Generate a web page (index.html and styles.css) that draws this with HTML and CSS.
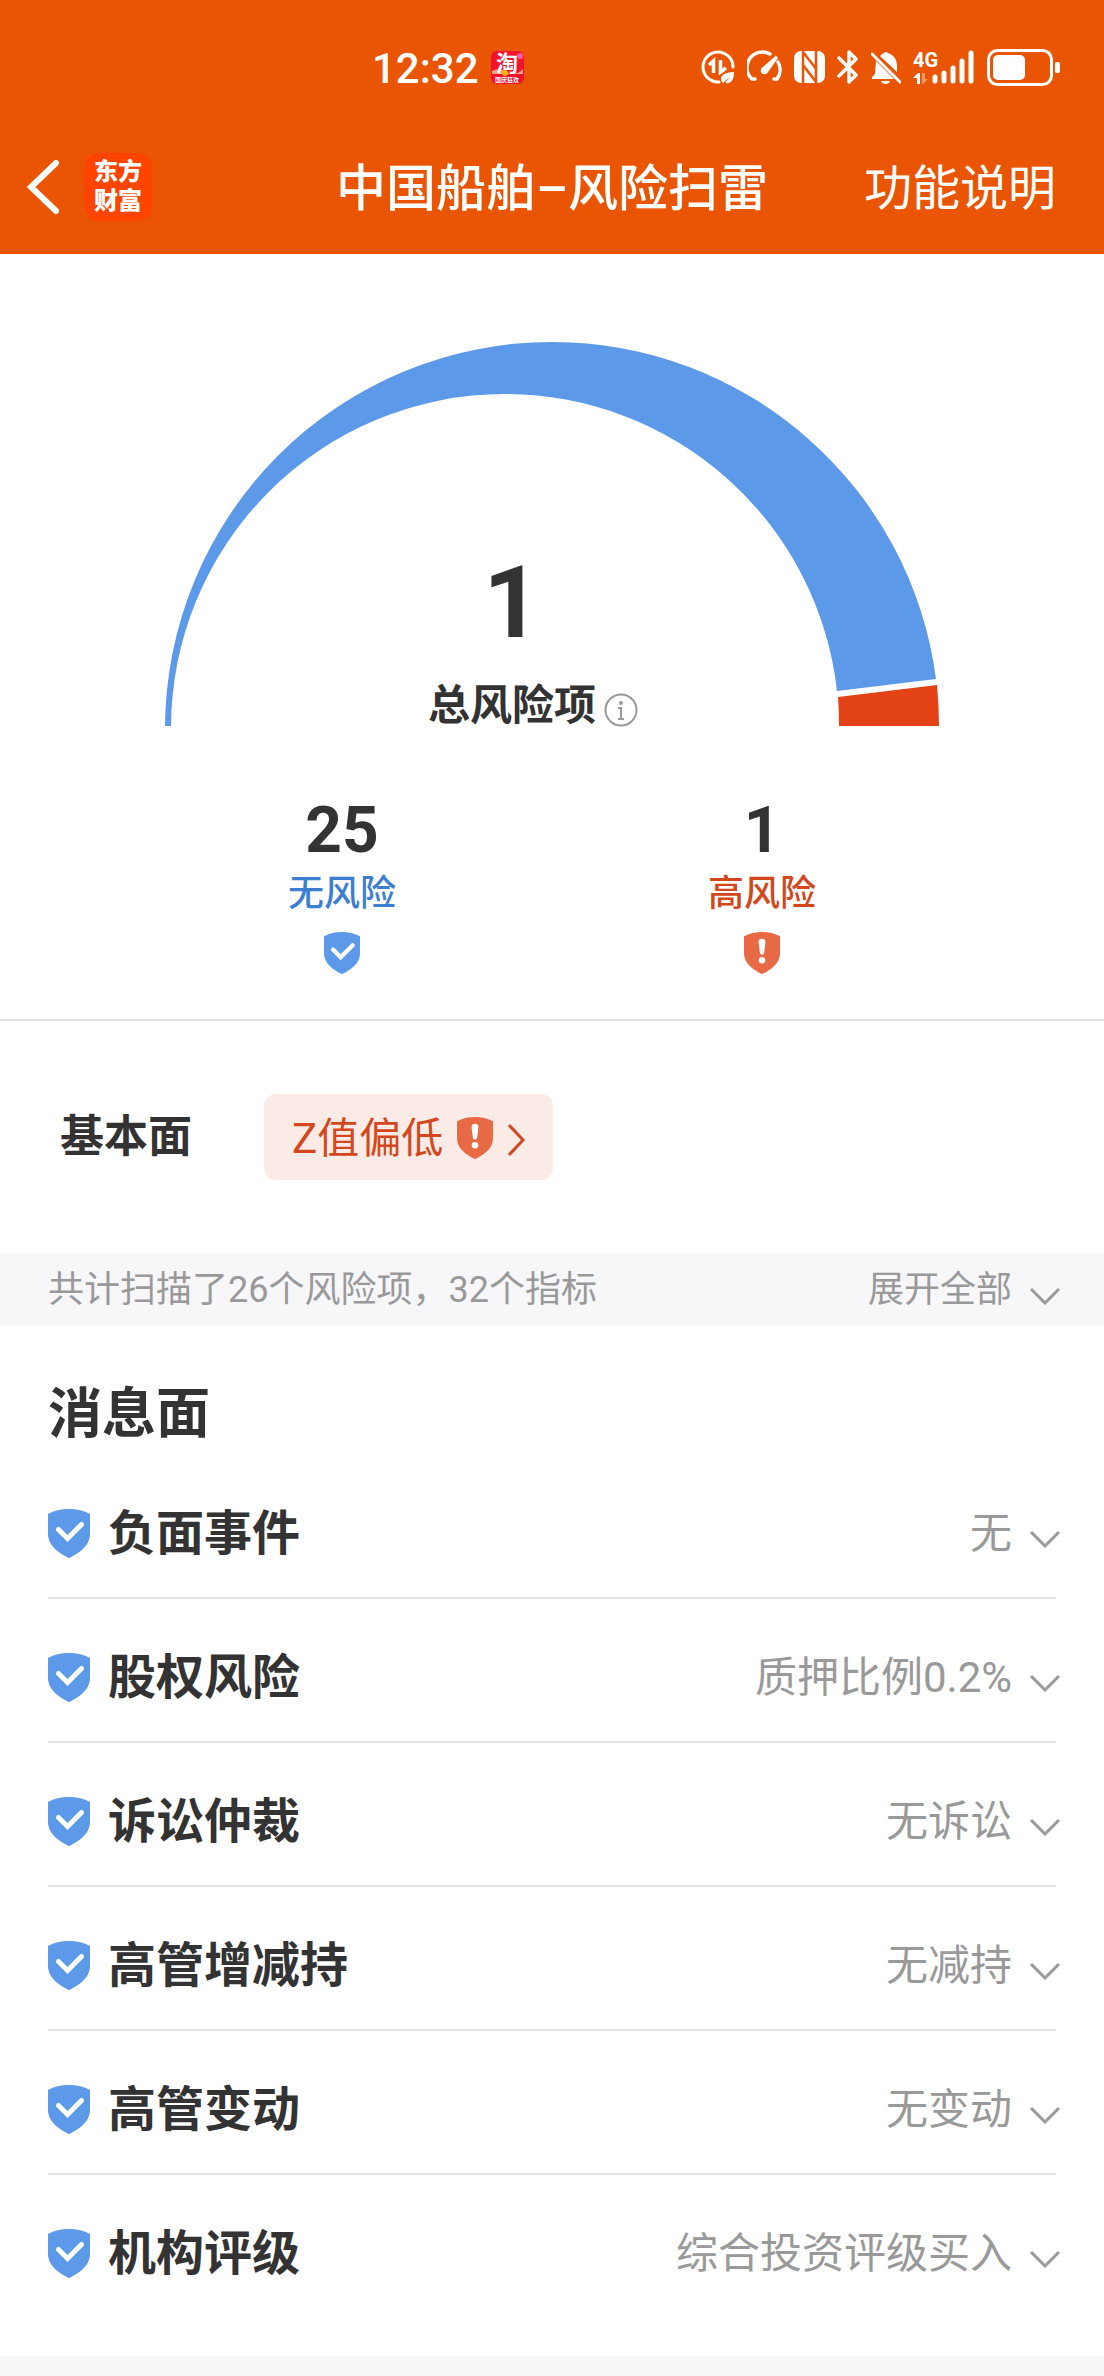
FILE: index.html
```html
<!DOCTYPE html>
<html lang="zh-CN">
<head>
<meta charset="utf-8">
<meta name="viewport" content="width=device-width, initial-scale=1">
<title>中国船舶–风险扫雷</title>
<link rel="stylesheet" href="styles.css">
</head>
<body>
<svg class="symbols" width="0" height="0" aria-hidden="true">
  <symbol id="shield-ok" viewBox="0 0 42 49">
    <path fill="#5c99e8" d="M0 5Q9 0 21 0T42 5V25C42 37 30 45 21 49C12 45 0 37 0 25Z"/>
    <path fill="none" stroke="#fff" stroke-width="5" stroke-linecap="round" d="M10.500 20.500L19.500 29.500L33.500 15.500"/>
  </symbol>
  <symbol id="shield-alert" viewBox="0 0 42 49">
    <path fill="#e86a45" d="M0 5Q9 0 21 0T42 5V25C42 37 30 45 21 49C12 45 0 37 0 25Z"/>
    <path fill="#fff" d="M17 12a4 4 0 0 1 8 0L23.500 24a2.500 2.500 0 0 1-5 0Z"/>
    <circle cx="21" cy="33" r="3.800" fill="#fff"/>
  </symbol>
  <symbol id="chevron-down" viewBox="0 0 30 30">
    <path fill="none" stroke="#999" stroke-width="3" d="M1 14L15 28L29 14"/>
  </symbol>
</svg>

<header class="top">
  <div class="status">
    <div class="status-left">
      <span class="clock">12:32</span>
      <svg width="33" height="33" viewBox="0 0 33 33" role="img" aria-label="淘宝">
        <rect width="33" height="33" rx="6" fill="#f0142f"/>
        <circle cx="29" cy="5" r="3" fill="#ff5f9e"/>
        <path fill="#f9a08a" d="M1 20Q8 16 16 21T32 18V23H1Z"/>
        <circle cx="14" cy="22" r="3" fill="#ffb400"/>
        <text class="tao" x="5" y="20">淘</text>
        <text class="tao-sub" x="4" y="31">国庆狂欢</text>
      </svg>
    </div>
    <div class="status-icons" aria-hidden="true">
      <svg width="34" height="34" viewBox="0 0 34 34" fill="none" stroke="#fff" stroke-width="3">
        <path d="M32 17A15 15 0 1 0 18 32" stroke-linecap="round"/>
        <path d="M8 15L12.500 11V23M19.500 10V22L25 18" stroke-width="3.500"/>
        <path fill="#fff" stroke="none" d="M33 22C25 22 20 25 20 29Q20 31 22 33L29 27L24 33C31 34 33 29 33 22Z"/>
      </svg>
      <svg width="35" height="34" viewBox="0 0 35 34" fill="none" stroke="#fff" stroke-width="3.500" stroke-linecap="round">
        <path d="M8 29H5A15.500 15.500 0 0 1 23 4M31 12A15.500 15.500 0 0 1 30 29H27"/>
        <path fill="#fff" stroke="none" d="M29 5.500L31 8L21 22A3.800 3.800 0 1 1 16 17Z"/>
      </svg>
      <svg width="31" height="34" viewBox="0 0 31 34">
        <rect y="1" width="31" height="32" rx="7" fill="#fff"/>
        <path fill="none" stroke="#ea5504" stroke-width="2.500" d="M9 33V2L23 20M22 1V32L9 15"/>
      </svg>
      <svg width="22" height="34" viewBox="0 0 22 34" fill="none" stroke="#fff" stroke-width="3.500" stroke-linecap="round" stroke-linejoin="round">
        <path d="M2 8L19 25L12 32V2L19 9L2 26"/>
      </svg>
      <svg width="30" height="34" viewBox="0 0 30 34" fill="#fff">
        <path d="M5 11L23 29H1V27L4 24ZM9 6Q11 4 13 3A2.500 2.500 0 0 1 17 3C23 5 26 10 26 16V22Z"/>
        <path d="M10 31H19Q18 34 14.500 34T10 31Z"/>
        <path d="M1 4L29 32" stroke="#fff" stroke-width="3" stroke-linecap="round"/>
      </svg>
      <svg width="62" height="50" viewBox="0 -8 62 50" fill="#fff">
        <text class="net" x="0" y="17">4G</text>
        <path d="M0 28L5 23H7V34H4V28Z"/>
        <path opacity=".4" d="M9 23H12V29H15L10 34H9Z"/>
        <path fill="none" stroke="#fff" stroke-width="5" stroke-linecap="round" d="M22 27V31M31 23V31M40 18V31M49 11V31M58 3V31"/>
      </svg>
      <svg width="73" height="37" viewBox="0 0 73 37">
        <rect x="1.500" y="1.500" width="63" height="34" rx="9" fill="none" stroke="#fff" stroke-width="3"/>
        <rect x="6" y="6" width="32" height="25" rx="5" fill="#fff"/>
        <rect x="68" y="13" width="5" height="11" rx="2" fill="#fff"/>
      </svg>
    </div>
  </div>
  <nav class="nav">
    <div class="nav-left">
      <button class="back" type="button" aria-label="返回">
        <svg width="33" height="56" viewBox="0 0 33 56"><path fill="none" stroke="#fff" stroke-width="6" stroke-linecap="round" d="M29 4L4 28L29 52"/></svg>
      </button>
      <a class="brand" href="#home"><span>东方</span><span>财富</span></a>
    </div>
    <h1 class="title">中国船舶–风险扫雷</h1>
    <a class="help" href="#help">功能说明</a>
  </nav>
</header>

<main>
  <section class="summary">
    <div class="gauge">
      <svg class="gauge-arc" viewBox="0 0 776 385" aria-hidden="true">
        <path fill="#5c99e8" d="M1 388A387 387 0 0 1 388 1A387 387 0 0 1 772 338L673 350A334 334 0 0 0 341 53A334 334 0 0 0 7 388Z"/>
        <path fill="#e24216" d="M773 344L674 356Q675 370 675 385H775Q775 365 773 344Z"/>
      </svg>
      <div class="total">
        <div class="total-text">
          <strong class="total-num">1</strong>
          <span class="total-label">总风险项</span>
        </div>
        <button class="info" type="button" aria-label="说明">
          <svg width="34" height="34" viewBox="0 0 34 34" fill="none" stroke="#999" stroke-width="2">
            <circle cx="17" cy="17" r="15.500"/>
            <circle cx="17" cy="10" r="2" fill="#999" stroke="none"/>
            <path d="M14 15H17V26M14 26H20"/>
          </svg>
        </button>
      </div>
    </div>
    <div class="stats">
      <div class="stat">
        <strong class="stat-num">25</strong>
        <span class="stat-label safe">无风险</span>
        <svg class="shield-sm"><use href="#shield-ok"/></svg>
      </div>
      <div class="stat">
        <strong class="stat-num">1</strong>
        <span class="stat-label danger">高风险</span>
        <svg class="shield-sm"><use href="#shield-alert"/></svg>
      </div>
    </div>
  </section>

  <section class="basic">
    <h2 class="basic-title">基本面</h2>
    <a class="tag" href="#z">
      <span class="tag-text">Z值偏低</span>
      <svg class="shield-sm"><use href="#shield-alert"/></svg>
      <svg width="18" height="36" viewBox="0 0 18 36"><path fill="none" stroke="#d2481c" stroke-width="3" d="M2 5L16 20L2 35"/></svg>
    </a>
  </section>

  <div class="scan">
    <span class="scan-text">共计扫描了26个风险项，32个指标</span>
    <button class="expand" type="button" aria-expanded="false"><span class="scan-text">展开全部</span><svg class="chevron"><use href="#chevron-down"/></svg></button>
  </div>

  <section class="news">
    <h2 class="news-title">消息面</h2>
    <ul class="rows">
      <li><button class="row" type="button" aria-expanded="false"><svg class="shield"><use href="#shield-ok"/></svg><span class="name">负面事件</span><span class="value">无</span><svg class="chevron"><use href="#chevron-down"/></svg></button></li>
      <li><button class="row" type="button" aria-expanded="false"><svg class="shield"><use href="#shield-ok"/></svg><span class="name">股权风险</span><span class="value">质押比例0.2%</span><svg class="chevron"><use href="#chevron-down"/></svg></button></li>
      <li><button class="row" type="button" aria-expanded="false"><svg class="shield"><use href="#shield-ok"/></svg><span class="name">诉讼仲裁</span><span class="value">无诉讼</span><svg class="chevron"><use href="#chevron-down"/></svg></button></li>
      <li><button class="row" type="button" aria-expanded="false"><svg class="shield"><use href="#shield-ok"/></svg><span class="name">高管增减持</span><span class="value">无减持</span><svg class="chevron"><use href="#chevron-down"/></svg></button></li>
      <li><button class="row" type="button" aria-expanded="false"><svg class="shield"><use href="#shield-ok"/></svg><span class="name">高管变动</span><span class="value">无变动</span><svg class="chevron"><use href="#chevron-down"/></svg></button></li>
      <li><button class="row" type="button" aria-expanded="false"><svg class="shield"><use href="#shield-ok"/></svg><span class="name">机构评级</span><span class="value">综合投资评级买入</span><svg class="chevron"><use href="#chevron-down"/></svg></button></li>
    </ul>
  </section>
</main>
</body>
</html>
```
FILE: styles.css
```css
* {
  box-sizing: border-box;
}

body {
  margin: 0;
  background: #f7f7fa;
  color: #333;
  font-family: Roboto, "Noto Sans CJK SC", sans-serif;
}

h1,
h2,
ul {
  margin: 0;
  padding: 0;
}

ul {
  list-style: none;
}

a {
  color: inherit;
  text-decoration: none;
}

button {
  margin: 0;
  padding: 0;
  border: 0;
  background: none;
  color: inherit;
  font: inherit;
  cursor: pointer;
}

svg {
  display: block;
  flex: none;
}

.symbols {
  position: absolute;
}

/* Status bar and navigation */
.top {
  background: #ea5504;
  color: #fff;
}

.status {
  display: flex;
  align-items: center;
  justify-content: space-between;
  height: 120px;
  padding: 14px 44px 0 372px;
}

.status-left,
.status-icons {
  display: flex;
  align-items: center;
  gap: 12px;
}

.clock {
  padding-top: 4px;
  font-size: 42px;
  font-weight: 500;
  line-height: 48px;
}

.tao {
  fill: #fff;
  font-size: 22px;
  font-weight: 700;
}

.tao-sub {
  fill: #fff;
  font-size: 6px;
  font-weight: 700;
}

.net {
  font-size: 20px;
  font-weight: 700;
}

.nav {
  display: grid;
  grid-template-columns: 1fr auto 1fr;
  align-items: center;
  height: 134px;
  padding: 0 48px;
}

.nav-left {
  display: flex;
  align-items: center;
  gap: 24px;
  margin-left: -21px;
}

.brand {
  display: flex;
  flex-direction: column;
  align-items: center;
  justify-content: center;
  width: 68px;
  height: 68px;
  border-radius: 14px;
  background: #ff4400;
  font-size: 24px;
  font-weight: 900;
  line-height: 29px;
}

.title,
.help {
  padding-top: 4px;
  line-height: 64px;
}

.title {
  font-size: 50px;
  font-weight: 500;
}

.help {
  justify-self: end;
  font-size: 48px;
}

/* Gauge and counters */
.summary {
  padding: 87px 24px 45px;
  border-bottom: 2px solid #e5e5e5;
  background: #fff;
}

.gauge {
  position: relative;
  max-width: 776px;
  margin: 0 auto;
}

.gauge-arc {
  width: 100%;
}

.total {
  position: absolute;
  right: 38px;
  bottom: -10px;
  left: 0;
  display: flex;
  align-items: flex-end;
  justify-content: center;
  gap: 8px;
}

.total-text {
  display: flex;
  flex-direction: column;
  align-items: center;
}

.total-num {
  margin-bottom: 15px;
  font-size: 100px;
  line-height: 116px;
}

.total-label {
  font-size: 42px;
  font-weight: 700;
  line-height: 60px;
}

.info {
  padding-bottom: 9px;
}

.stats {
  display: flex;
  justify-content: center;
  padding-top: 68px;
}

.stat {
  display: flex;
  flex: 0 1 420px;
  flex-direction: column;
  align-items: center;
}

.stat-num {
  font-size: 64px;
  line-height: 74px;
}

.stat-label {
  margin-bottom: 12px;
  font-size: 36px;
  font-weight: 500;
  line-height: 52px;
}

.safe {
  color: #3c7fd0;
}

.danger {
  color: #d2481c;
}

.shield-sm {
  width: 36px;
  height: 42px;
}

/* Fundamentals */
.basic {
  display: flex;
  align-items: center;
  gap: 72px;
  padding: 73px 60px;
  background: #fff;
}

.basic-title {
  font-size: 44px;
  line-height: 64px;
}

.tag {
  display: flex;
  align-items: center;
  gap: 14px;
  height: 86px;
  padding: 2px 28px 0;
  border-radius: 12px;
  background: #fbebe6;
  color: #d2481c;
  font-size: 42px;
}

.tag-text {
  padding-bottom: 8px;
}

/* Scan summary bar */
.scan {
  display: flex;
  align-items: center;
  justify-content: space-between;
  height: 72px;
  padding: 2px 48px 0;
  color: #999;
  font-size: 36px;
}

.scan-text {
  padding-bottom: 8px;
}

.expand {
  display: flex;
  align-items: center;
  gap: 18px;
}

.chevron {
  width: 30px;
  height: 30px;
  margin-right: -4px;
}

/* News list */
.news {
  padding: 50px 48px 37px;
  background: #fff;
}

.news-title {
  font-size: 54px;
  line-height: 80px;
}

.row {
  display: flex;
  align-items: center;
  gap: 18px;
  width: 100%;
  height: 144px;
  padding-top: 14px;
  border-bottom: 2px solid #e5e5e5;
}

.rows li:last-child .row {
  border-bottom-color: transparent;
}

.shield {
  width: 42px;
  height: 49px;
}

.name,
.value {
  padding-bottom: 8px;
}

.name {
  font-size: 48px;
  font-weight: 700;
}

.value {
  margin-left: auto;
  color: #999;
  font-size: 42px;
}
```
